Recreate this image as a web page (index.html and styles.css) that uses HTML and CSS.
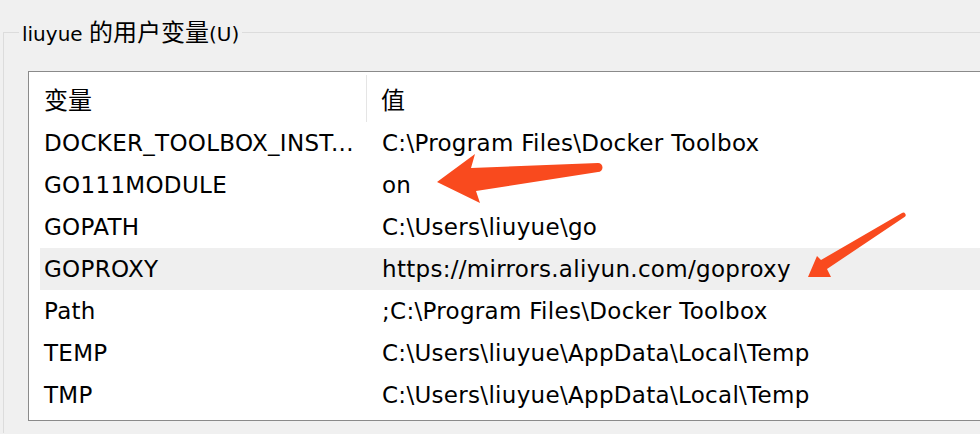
FILE: index.html
```html
<!DOCTYPE html>
<html lang="zh-CN">
<head>
<meta charset="utf-8">
<title>用户变量</title>
<link rel="stylesheet" href="styles.css">
</head>
<body>
<fieldset class="group">
  <legend class="group-title">liuyue <span class="cjk">的用户变量</span>(U)</legend>
  <div class="list">
    <div class="list-head">
      <div class="head-cell head-first"><span class="cjk">变量</span></div>
      <div class="head-cell head-second"><span class="cjk">值</span></div>
    </div>
    <div class="row"><div class="cell">DOCKER_TOOLBOX_INST...</div><div class="cell">C:\Program Files\Docker Toolbox</div></div>
    <div class="row"><div class="cell">GO111MODULE</div><div class="cell">on</div></div>
    <div class="row"><div class="cell">GOPATH</div><div class="cell">C:\Users\liuyue\go</div></div>
    <div class="row row-selected"><div class="cell">GOPROXY</div><div class="cell">https://mirrors.aliyun.com/goproxy</div></div>
    <div class="row"><div class="cell">Path</div><div class="cell">;C:\Program Files\Docker Toolbox</div></div>
    <div class="row"><div class="cell">TEMP</div><div class="cell">C:\Users\liuyue\AppData\Local\Temp</div></div>
    <div class="row"><div class="cell">TMP</div><div class="cell">C:\Users\liuyue\AppData\Local\Temp</div></div>
  </div>
</fieldset>
<svg class="marks" width="980" height="434" viewBox="0 0 980 434" aria-hidden="true">
  <path class="arrow" d="M437,182 L475,154 L471,168 L598,163 A4.3,4.3 0 0 1 598,172 L476,191 L480,203 Z"/>
  <path class="arrow" d="M808,277 L817,256 L821,260 L902,213 A2,2 0 0 1 904.5,217 L827,269 L831,277 Z"/>
</svg>
</body>
</html>
```
FILE: styles.css
```css
html, body {
  margin: 0;
  padding: 0;
}
body {
  width: 980px;
  height: 434px;
  overflow: hidden;
  background: #f0f0f0;
  position: relative;
  font-family: "DejaVu Sans", "Noto Sans CJK SC", sans-serif;
  color: #000;
}
.group {
  box-sizing: border-box;
  margin: 19px 0 0 3px;
  padding: 0 0 12px 0;
  width: 977px;
  border: 1px solid #dcdcdc;
  border-right: none;
  border-bottom: none;
  min-width: 0;
}
.group-title {
  margin-left: 15px;
  padding: 0 3px;
  font-size: 20px;
  line-height: 24px;
}
.cjk {
  font-family: "Noto Sans CJK SC", sans-serif;
  font-size: 24px;
}
.list {
  margin: 25px 0 0 24px;
  background: #fff;
  border: 1px solid #8a8a8a;
  border-right: none;
  padding: 0 0 4px 11px;
}
.list-head {
  display: grid;
  grid-template-columns: 327px 1fr;
  margin-top: 3px;
  height: 47px;
}
.head-cell {
  display: flex;
  align-items: center;
}
.head-first {
  padding-left: 4px;
  border-right: 1px solid #e5e5e5;
}
.head-second {
  padding-left: 14px;
}
.row {
  display: grid;
  grid-template-columns: 338px 1fr;
  height: 42px;
  line-height: 42px;
  font-size: 23px;
  letter-spacing: 0.3px;
  white-space: nowrap;
}
.row-selected {
  background: #efefef;
}
.cell {
  padding-left: 4px;
  overflow: hidden;
}
.marks {
  position: absolute;
  left: 0;
  top: 0;
  pointer-events: none;
}
.arrow {
  fill: #f94a1e;
}
```
